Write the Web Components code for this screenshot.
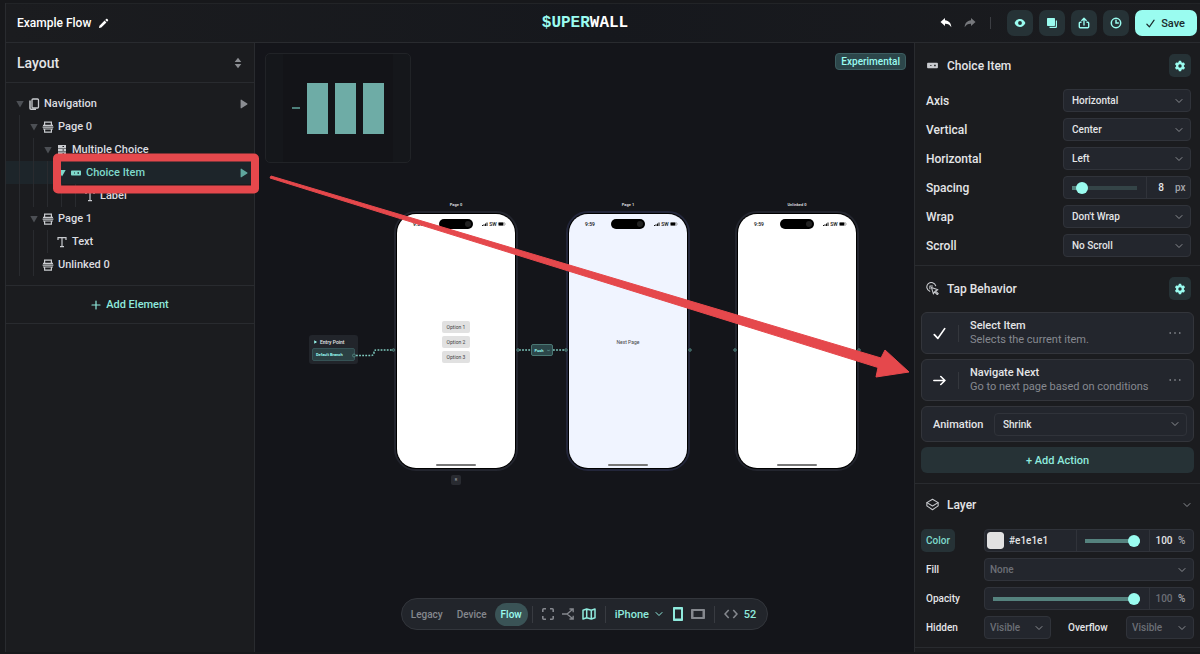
<!DOCTYPE html>
<html lang="en">
<head>
<meta charset="utf-8">
<meta name="viewport" content="width=device-width, initial-scale=1">
<title>Example Flow - Superwall</title>
<style>
    html, body {
        margin: 0;
        height: 100%;
    }
    body {
        --mint: #9afcf0;
        --mint-dim: #7fd9cb;
        --panel: #1b1c1f;
        --canvas: #14151a;
        --field: #23262d;
        --line: #292b2f;
        --text: #e4e5e7;
        --muted: #7b7e85;
        --button: #263236;
        background: #16171a;
        color: var(--text);
        font-family: Roboto, "Liberation Sans", sans-serif;
        font-size: 11px;
        font-weight: 500;
    }
</style>
</head>
<body>
<flow-editor>
    <editor-header slot="header" project="Example Flow"></editor-header>

    <layout-panel slot="left">
        <tree-row depth="0" icon="pages" label="Navigation" open playable></tree-row>
        <tree-row depth="1" icon="page" label="Page 0" open></tree-row>
        <tree-row depth="2" icon="choices" label="Multiple Choice" open></tree-row>
        <tree-row depth="3" icon="item" label="Choice Item" open playable selected></tree-row>
        <tree-row depth="4" icon="text" label="Label"></tree-row>
        <tree-row depth="1" icon="page" label="Page 1" open></tree-row>
        <tree-row depth="2" icon="text" label="Text"></tree-row>
        <tree-row depth="1" icon="page" label="Unlinked 0"></tree-row>
    </layout-panel>

    <flow-canvas slot="canvas"></flow-canvas>

    <inspector-panel slot="right"></inspector-panel>

    <tutorial-arrow slot="overlay"></tutorial-arrow>
</flow-editor>

<script>
// ---------- Icons ----------

const ICONS = {
    pencil: ['0 0 12 12', '<path fill="currentColor" d="M1 11l.6-2.6 5.6-5.6 2 2-5.600 5.600zM7.900 2.100l1-1c.4-.4.9-.4 1.300 0l.7.7c.4.4.4.9 0 1.300l-1 1z"/>'],
    undo: ['0 0 12 12', '<path fill="currentColor" d="M5 1L.5 5 5 9V6.700c2.800-.1 4.800.7 6.300 3.600C11.400 6.500 9 3.500 5 3.200z"/>'],
    redo: ['0 0 12 12', '<path fill="currentColor" d="M7 1l4.500 4L7 9V6.700C4.200 6.600 2.200 7.400.7 10.300.6 6.500 3 3.500 7 3.200z"/>'],
    eye: ['0 0 12 12', '<path fill="currentColor" fill-rule="evenodd" d="M6 2C3.400 2 1.500 3.700.6 6c.9 2.300 2.800 4 5.400 4s4.500-1.700 5.400-4C10.500 3.700 8.600 2 6 2zm0 2.100a1.900 1.900 0 110 3.800 1.900 1.900 0 010-3.800z"/>'],
    copy: ['0 0 12 12', '<path fill="currentColor" d="M1 2c0-.6.4-1 1-1h6c.6 0 1 .4 1 1v6c0 .6-.4 1-1 1H2c-.6 0-1-.4-1-1z"/><path fill="none" stroke="currentColor" stroke-width="1.200" d="M10.400 3.500v6.200c0 .4-.3.700-.7.700H3.500"/>'],
    share: ['0 0 12 12', '<g fill="none" stroke="currentColor" stroke-width="1.400" stroke-linecap="round" stroke-linejoin="round"><path d="M6 8V1.500M3.800 3.500L6 1.300l2.200 2.200M3 5.300H2.200c-.5 0-.9.4-.9.9v3.600c0 .5.4.9.9.9h7.600c.5 0 .9-.4.9-.9V6.200c0-.5-.4-.9-.9-.9H9"/></g>'],
    clock: ['0 0 12 12', '<g fill="none" stroke="currentColor" stroke-width="1.500" stroke-linecap="round"><circle cx="6" cy="6" r="4.700"/><path d="M6 3.300V6h2.300"/></g>'],
    check: ['0 0 12 12', '<path fill="none" stroke="currentColor" stroke-width="1.600" stroke-linecap="round" stroke-linejoin="round" d="M1.200 7l3.300 3.500L10.800 1.500"/>'],
    arrow: ['0 0 12 12', '<path fill="none" stroke="currentColor" stroke-width="1.500" stroke-linecap="round" stroke-linejoin="round" d="M.8 6h10.200M7.200 2.300L11 6 7.200 9.700"/>'],
    sort: ['0 0 8 12', '<path fill="currentColor" d="M4 .8l3.300 4.200H.7zM4 11.200L.7 7h6.600z"/>'],
    down: ['0 0 8 8', '<path fill="currentColor" d="M.3 1h7.400L4 7.500z"/>'],
    play: ['0 0 8 10', '<path fill="currentColor" d="M.6 1.200c0-.5.5-.7.8-.5l5.900 3.900c.3.2.3.6 0 .8l-5.900 3.900c-.3.2-.8 0-.8-.5z"/>'],
    chevron: ['0 0 8 8', '<path fill="none" stroke="currentColor" stroke-width="1" stroke-linecap="round" stroke-linejoin="round" d="M1 2.500l3 3 3-3"/>'],
    pages: ['0 0 12 12', '<g fill="none" stroke="currentColor"><rect x="4" y="1" width="6.500" height="9" rx="1" stroke-width="1.300"/><path d="M2 2.500v7.700c0 .7.300 1 1 1h5" stroke-width="1.500"/></g>'],
    page: ['0 0 12 12', '<g fill="none" stroke="currentColor" stroke-width="1.200"><path d="M2.600 4.500V1.100h6.800v3.400M1 4.400h10M.6 6.200h10.800"/><path d="M2.600 8h6.800v3.200H2.600zM1 8h10"/></g>'],
    choices: ['0 0 12 12', '<path fill="currentColor" fill-rule="evenodd" d="M2 1h8v3H2zM2 4.600h8v3H2zM2 8.200h8v3H2zM6.500 2v.9H8V2zM6.500 5.600v.9H8v-.9zM6.500 9.200v.9H8v-.9z"/>'],
    item: ['0 0 12 12', '<path fill="currentColor" fill-rule="evenodd" d="M1.800 3.500h8.400c.5 0 .8.3.8.8v3.400c0 .5-.3.8-.8.8H1.800c-.5 0-.8-.3-.8-.8V4.300c0-.5.3-.8.8-.8zm2.200 2v1h1v-1zm3.500-.2v1.400H9V5.300z"/>'],
    text: ['0 0 12 12', '<path fill="none" stroke="currentColor" stroke-width="1.200" d="M2 4V1.700h8V4M6 1.700v8.900M4 10.600h4"/>'],
    plus: ['0 0 10 10', '<path fill="none" stroke="currentColor" stroke-width="1.200" stroke-linecap="round" d="M5 1v8M1 5h8"/>'],
    gear: ['0 0 12 12', '<path fill="currentColor" fill-rule="evenodd" d="M4.900.8h2.200l.4 1.500.9.500 1.500-.4 1.100 1.900-1.100 1.100v1.200L11 7.700 9.900 9.600l-1.500-.4-.9.500-.4 1.500H4.900l-.4-1.500-.9-.5-1.500.4L1 7.700l1.100-1.100V5.400L1 4.300l1.100-1.900 1.500.4.900-.5zM6 4.300a1.700 1.700 0 100 3.400 1.700 1.700 0 000-3.400z"/>'],
    tap: ['0 0 12 12', '<g fill="none" stroke="currentColor" stroke-width="1" stroke-linejoin="round" stroke-linecap="round"><path d="M3.500 8.600A4.200 4.200 0 119 3.500M3.600 6.300V3.700H6"/><path d="M5 5l6 2.100-2.400 1.100 2.700 2.500-.9.900-2.600-2.600L6.800 11z"/></g>'],
    layers: ['0 0 12 12', '<g fill="none" stroke="currentColor" stroke-width="1" stroke-linejoin="round" stroke-linecap="round"><path d="M6 1.200l5.200 3.100L6 7.400.8 4.300z"/><path d="M.8 4.500v2.800L6 10.800l5.200-3.500V4.500"/></g>'],
    dots: ['0 0 12 12', '<g fill="currentColor"><circle cx="1.200" cy="6" r=".8"/><circle cx="6" cy="6" r=".8"/><circle cx="10.800" cy="6" r=".8"/></g>'],
    frame: ['0 0 12 12', '<path fill="none" stroke="currentColor" stroke-width="1.600" d="M.8 4V1.800c0-.6.4-1 1-1H4M8 .8h2.200c.6 0 1 .4 1 1V4M11.200 8v2.200c0 .6-.4 1-1 1H8M4 11.200H1.800c-.6 0-1-.4-1-1V8"/>'],
    branch: ['0 0 12 12', '<g fill="none" stroke="currentColor" stroke-width="1.300"><path d="M0 6h5l5.500-4.500M5 6l5.500 4.500M7.500 1h3.700v3.300M7.500 11h3.700V7.700"/></g>'],
    map: ['0 0 14 12', '<path fill="none" stroke="currentColor" stroke-width="1.500" stroke-linejoin="round" d="M1 2.300L4.700 1l4.600 1.300L13 1v8.700L9.300 11 4.700 9.700 1 11zM4.700 1v8.700M9.300 2.300V11"/>'],
    portrait: ['0 0 10 14', '<path fill="currentColor" fill-rule="evenodd" d="M1 0h8c.6 0 1 .4 1 1v12c0 .6-.4 1-1 1H1c-.6 0-1-.4-1-1V1c0-.6.4-1 1-1zm1 2.500v9h6v-9z"/>'],
    landscape: ['0 0 14 10', '<path fill="currentColor" fill-rule="evenodd" d="M1 0h12c.6 0 1 .4 1 1v8c0 .6-.4 1-1 1H1c-.6 0-1-.4-1-1V1c0-.6.4-1 1-1zm1.500 2v6h9V2z"/>'],
    code: ['0 0 14 10', '<path fill="none" stroke="currentColor" stroke-width="1.600" d="M4.700 1L1 5l3.700 4M9.300 1L13 5 9.300 9"/>'],
    signal: ['0 0 6 4', '<g fill="#111"><path d="M0 3h1v1H0zM1.500 2.300h1V4h-1zM3 1.500h1V4H3zM4.500.6h1V4h-1z"/></g>'],
    battery: ['0 0 8 4', '<rect x=".3" y=".3" width="6.400" height="3.400" rx="1" fill="none" stroke="#777" stroke-width=".5"/><rect x=".6" y=".6" width="4.800" height="2.800" rx=".6" fill="#000"/><path d="M7.200 1.500v1" stroke="#777" stroke-width=".6"/>']
};

function icon(name, width = 12, height = width) {
    const [box, body] = ICONS[name];
    return `<svg width="${width}" height="${height}" viewBox="${box}" aria-hidden="true">${body}</svg>`;
}

// Shared by every component that holds form controls
const BASE = `
    * { box-sizing: border-box; }
    svg { display: block; flex: none; }
    button, input, select {
        font: inherit;
        color: inherit;
        margin: 0;
        padding: 0;
        border: 0;
        background: none;
        appearance: none;
        outline: none;
    }
    button { cursor: pointer; }
`;

const SLIDER = `
    input[type="range"] {
        width: 100%;
        min-width: 0;
        height: 12px;
        background: linear-gradient(to right, #55827e var(--fill), #344447 var(--fill)) center / 100% 4px no-repeat;
        border-radius: 2px;
    }
    input[type="range"]::-webkit-slider-thumb {
        appearance: none;
        width: 12px;
        height: 12px;
        border-radius: 50%;
        background: var(--mint);
    }
    .box {
        display: flex;
        height: 23px;
        border: 1px solid #30333a;
        border-radius: 4px;
        background: var(--field);
        font-size: 10px;
    }
    .track {
        flex: 1;
        display: flex;
        align-items: center;
        min-width: 0;
        padding: 0 9px 0 8px;
    }
    .amount {
        display: flex;
        align-items: center;
        width: 44px;
        border-left: 1px solid #30333a;
    }
    .amount input { width: 28px; text-align: center; }
    .unit { color: #a5a7ac; }
`;

// ---------- Page frame ----------

class FlowEditor extends HTMLElement {
    constructor() {
        super();
        this.attachShadow({ mode: 'open' });
    }

    connectedCallback() {
        this.shadowRoot.innerHTML = `
            <style>
                :host {
                    display: grid;
                    grid-template: auto 1fr / auto 1fr auto;
                    position: relative;
                    box-sizing: border-box;
                    min-height: 100%;
                    padding: 3px 0 2px 5px;
                    background: #17181b;
                    overflow: hidden;
                }
                .header { grid-column: 1 / -1; }
                .header, .left { border-left: 1px solid var(--line); }
                .canvas, .left, .right { display: grid; }
            </style>
            <div class="header"><slot name="header"></slot></div>
            <div class="left"><slot name="left"></slot></div>
            <div class="canvas"><slot name="canvas"></slot></div>
            <div class="right"><slot name="right"></slot></div>
            <slot name="overlay"></slot>
        `;
    }
}

customElements.define('flow-editor', FlowEditor);

// ---------- Header ----------

class EditorHeader extends HTMLElement {
    constructor() {
        super();
        this.attachShadow({ mode: 'open' });
    }

    connectedCallback() {
        this.shadowRoot.innerHTML = `
            <style>
                ${BASE}
                :host {
                    display: grid;
                    grid-template-columns: 1fr auto 1fr;
                    align-items: center;
                    box-sizing: border-box;
                    height: 40px;
                    padding: 0 3px 0 11px;
                    border-top: 1px solid #222427;
                    border-bottom: 1px solid var(--line);
                    background: linear-gradient(to right, #1b1c1f, #16181d 50%, #1b1c1f);
                }
                .project, .actions, .save {
                    display: flex;
                    align-items: center;
                }
                .project { gap: 7px; font-size: 12px; color: #fff; }
                .brand {
                    font: bold 16px "Liberation Mono", monospace;
                    color: #fff;
                    padding-right: 44px;
                }
                .brand span { color: var(--mint); }
                .actions { justify-content: flex-end; gap: 6px; }
                .plain { width: 18px; display: grid; place-items: center; color: #fff; }
                .plain:disabled { color: #76787c; }
                .divider { width: 1px; height: 12px; margin: 0 10px 0 5px; background: #3c3e43; }
                .tool {
                    display: grid;
                    place-items: center;
                    width: 26px;
                    height: 26px;
                    border-radius: 7px;
                    background: var(--button);
                    color: var(--mint);
                }
                .save {
                    gap: 6px;
                    height: 26px;
                    padding: 0 12px 0 11px;
                    border-radius: 7px;
                    background: var(--mint);
                    color: #1b2a2c;
                    font-size: 11px;
                }
            </style>
            <div class="project"><span>${this.getAttribute('project')}</span>${icon('pencil', 11)}</div>
            <div class="brand"><span>$UPER</span>WALL</div>
            <div class="actions">
                <button class="plain" aria-label="Undo">${icon('undo')}</button>
                <button class="plain" aria-label="Redo" disabled>${icon('redo')}</button>
                <span class="divider"></span>
                <button class="tool" aria-label="Preview">${icon('eye')}</button>
                <button class="tool" aria-label="Duplicate">${icon('copy')}</button>
                <button class="tool" aria-label="Share">${icon('share')}</button>
                <button class="tool" aria-label="History">${icon('clock')}</button>
                <button class="save">${icon('check', 9)}Save</button>
            </div>
        `;
    }
}

customElements.define('editor-header', EditorHeader);

// ---------- Layout tree ----------

class LayoutPanel extends HTMLElement {
    constructor() {
        super();
        this.attachShadow({ mode: 'open' });
    }

    connectedCallback() {
        this.shadowRoot.innerHTML = `
            <style>
                ${BASE}
                :host {
                    display: block;
                    box-sizing: border-box;
                    width: 249px;
                    background: var(--panel);
                    border-right: 1px solid var(--line);
                }
                header {
                    display: flex;
                    align-items: center;
                    justify-content: space-between;
                    height: 40px;
                    padding: 0 12px 0 11px;
                    border-bottom: 1px solid var(--line);
                    color: #8b8d92;
                }
                h2 { margin: 0; font-size: 14px; font-weight: 500; color: var(--text); }
                .tree { padding: 9px 0; border-bottom: 1px solid var(--line); }
                .add {
                    display: flex;
                    align-items: center;
                    justify-content: center;
                    gap: 5px;
                    width: 100%;
                    height: 38px;
                    border-bottom: 1px solid var(--line);
                    color: #8feadd;
                    font-size: 11px;
                }
            </style>
            <header><h2>Layout</h2>${icon('sort', 8, 12)}</header>
            <div class="tree" role="tree"><slot></slot></div>
            <button class="add">${icon('plus', 10)}Add Element</button>
        `;
    }
}

customElements.define('layout-panel', LayoutPanel);

class TreeRow extends HTMLElement {
    constructor() {
        super();
        this.attachShadow({ mode: 'open' });
    }

    connectedCallback() {
        const depth = Number(this.getAttribute('depth'));
        const open = this.hasAttribute('open');
        // leaves draw a guide where branches draw their triangle
        const guides = '<i class="guide"></i>'.repeat(open ? depth : depth + 1);

        this.setAttribute('role', 'treeitem');
        this.shadowRoot.innerHTML = `
            <style>
                ${BASE}
                :host {
                    display: flex;
                    align-items: center;
                    height: 23px;
                    padding: 0 6px 0 7px;
                    color: #dcdde0;
                    font-size: 11px;
                }
                :host([selected]) { background: #1d252a; color: var(--mint-dim); }
                .guide {
                    align-self: stretch;
                    width: 14px;
                    background: linear-gradient(#292b2f, #292b2f) 6px 0 / 1px 100% no-repeat;
                }
                .toggle, .kind { display: grid; place-items: center; width: 14px; }
                .toggle { color: #4c4f54; }
                :host([selected]) .toggle { color: var(--mint-dim); }
                .kind { color: #c9cbcf; }
                :host([selected]) .kind { color: var(--mint-dim); }
                .label { flex: 1; margin-left: 3px; }
                .run { color: #8b8d92; }
                :host([selected]) .run { color: #5fa69d; }
            </style>
            ${guides}
            ${open ? `<button class="toggle" aria-label="Collapse">${icon('down', 8)}</button>` : ''}
            <span class="kind">${icon(this.getAttribute('icon'), 12)}</span>
            <span class="label">${this.getAttribute('label')}</span>
            ${this.hasAttribute('playable') ? `<button class="run" aria-label="Play">${icon('play', 8, 10)}</button>` : ''}
        `;
    }
}

customElements.define('tree-row', TreeRow);

// ---------- Canvas ----------

class PhonePreview extends HTMLElement {
    constructor() {
        super();
        this.attachShadow({ mode: 'open' });
    }

    connectedCallback() {
        this.shadowRoot.innerHTML = `
            <style>
                ${BASE}
                :host { display: block; width: 124px; text-align: center; }
                .name { height: 14px; font-size: 4px; line-height: 16px; color: #d4d6da; font-weight: 700; }
                .case {
                    height: 260px;
                    padding: 1px;
                    border: 2px solid #23252e;
                    border-radius: 22px;
                    background: #000;
                }
                .screen {
                    display: flex;
                    flex-direction: column;
                    height: 100%;
                    border-radius: 19px;
                    background: #fff;
                    color: #444;
                    font-size: 5px;
                    font-weight: 400;
                }
                :host([tinted]) .case { border-color: #23263a; }
                :host([tinted]) .screen { background: #f0f4ff; }
                .status {
                    display: grid;
                    grid-template-columns: 1fr 34px 1fr;
                    align-items: center;
                    height: 20px;
                    color: #111;
                    font-weight: 500;
                }
                .island {
                    display: flex;
                    justify-content: flex-end;
                    height: 10px;
                    padding: 2px;
                    border-radius: 5px;
                    background: #000;
                }
                .island i { width: 6px; height: 6px; border-radius: 50%; background: #222; }
                .signal { display: flex; align-items: center; justify-content: center; gap: 1px; }
                .body {
                    flex: 1;
                    display: flex;
                    flex-direction: column;
                    align-items: center;
                    justify-content: center;
                    gap: 3px;
                    padding-bottom: 14px;
                }
                .home { width: 40px; height: 2px; margin: 0 auto 2px; border-radius: 1px; background: #777; }
            </style>
            <div class="name">${this.getAttribute('name')}</div>
            <div class="case">
                <div class="screen">
                    <div class="status">
                        <span>9:59</span>
                        <span class="island"><i></i></span>
                        <span class="signal">${icon('signal', 6, 4)}SW${icon('battery', 8, 4)}</span>
                    </div>
                    <div class="body"><slot></slot></div>
                    <div class="home"></div>
                </div>
            </div>
        `;
    }
}

customElements.define('phone-preview', PhonePreview);

class FlowCanvas extends HTMLElement {
    constructor() {
        super();
        this.attachShadow({ mode: 'open' });
    }

    connectedCallback() {
        this.shadowRoot.innerHTML = `
            <style>
                ${BASE}
                :host {
                    display: flex;
                    flex-direction: column;
                    align-items: center;
                    position: relative;
                    box-sizing: border-box;
                    min-width: 0;
                    padding: 10px 8px 22px;
                    background: var(--canvas);
                    overflow: hidden;
                }
                .badge {
                    align-self: flex-end;
                    padding: 0 5px;
                    border: 1px solid #3c5d60;
                    border-radius: 4px;
                    background: #2c464a;
                    color: var(--mint);
                    font-size: 10px;
                    line-height: 15px;
                }
                flow-toolbar { margin-top: auto; }

                /* nodes on the free canvas */
                .node { position: absolute; }
                .minimap {
                    left: 10px;
                    top: 10px;
                    display: flex;
                    align-items: center;
                    justify-content: center;
                    gap: 7px;
                    width: 146px;
                    height: 110px;
                    border: 1px solid #212327;
                    border-radius: 5px;
                    background: linear-gradient(#131418, #131418) center / 110px 100% no-repeat #15171b;
                }
                .minimap i { width: 21px; height: 51px; background: #6eaca6; }
                .minimap i:first-child { width: 8px; height: 2px; background: #4d807b; }
                .edges { left: 0; top: 0; }
                .p0 { left: 139px; top: 154px; }
                .p1 { left: 311px; top: 154px; }
                .p2 { left: 480px; top: 154px; }
                .option {
                    padding: 0 5px;
                    border-radius: 2px;
                    background: #e1e1e1;
                    line-height: 12px;
                }
                .entry {
                    left: 54px;
                    top: 292px;
                    width: 49px;
                    padding: 0 3px 3px;
                    border-radius: 3px;
                    background: #22252b;
                    font-size: 5px;
                }
                .entry div { display: flex; align-items: center; gap: 3px; height: 13px; padding-left: 2px; }
                .entry p {
                    margin: 0;
                    padding-left: 3px;
                    border: 1px solid #365356;
                    border-radius: 2px;
                    background: #2b4043;
                    color: var(--mint);
                    font-size: 4px;
                    font-weight: 700;
                    line-height: 11px;
                }
                .entry svg { color: var(--mint); }
                .push {
                    left: 276px;
                    top: 301px;
                    display: flex;
                    align-items: center;
                    justify-content: center;
                    gap: 3px;
                    width: 22px;
                    height: 12px;
                    border: 1px solid #4a7773;
                    border-radius: 2px;
                    background: #2c474a;
                    color: var(--mint);
                    font-size: 4px;
                    font-weight: 700;
                }
                .key {
                    left: 196px;
                    top: 432px;
                    width: 10px;
                    height: 10px;
                    border-radius: 2px;
                    background: #292b31;
                    color: #9a9ca2;
                    font-size: 4px;
                    line-height: 10px;
                    text-align: center;
                }
            </style>
            <span class="badge">Experimental</span>

            <div class="node minimap"><i></i><i></i><i></i><i></i></div>

            <phone-preview class="node p0" name="Page 0">
                <span class="option">Option 1</span>
                <span class="option">Option 2</span>
                <span class="option">Option 3</span>
            </phone-preview>
            <phone-preview class="node p1" name="Page 1" tinted>Next Page</phone-preview>
            <phone-preview class="node p2" name="Unlinked 0"></phone-preview>

            <div class="node entry">
                <div>${icon('play', 3, 4)}Entry Point</div>
                <p>Default Branch</p>
            </div>

            <svg class="node edges" width="620" height="340" viewBox="0 0 620 340">
                <g fill="none" stroke="#7fcabf" stroke-width="1.500" stroke-dasharray="1.800 1.300">
                    <path d="M101 312.500h15q3 0 3-3t3-2.500h16M264 307h12M298 307h13"/>
                </g>
                <g fill="#2b4043" stroke="#558c86" stroke-width=".8">
                    <circle cx="99" cy="312.500" r="1.500"/>
                    <circle cx="138.500" cy="307" r="1.300"/>
                    <circle cx="263" cy="307" r="1.300"/>
                    <circle cx="311" cy="307" r="1.300"/>
                    <circle cx="435" cy="307" r="1.300"/>
                    <circle cx="480" cy="307" r="1.300"/>
                    <circle cx="604" cy="307" r="1.300"/>
                </g>
            </svg>
            <button class="node push">Push${icon('chevron', 3)}</button>
            <span class="node key">R</span>

            <flow-toolbar></flow-toolbar>
        `;
    }
}

customElements.define('flow-canvas', FlowCanvas);

class FlowToolbar extends HTMLElement {
    constructor() {
        super();
        this.attachShadow({ mode: 'open' });
    }

    connectedCallback() {
        this.shadowRoot.innerHTML = `
            <style>
                ${BASE}
                :host {
                    display: flex;
                    align-items: center;
                    box-sizing: border-box;
                    height: 32px;
                    padding: 0 11px 0 3px;
                    border: 1px solid #33363c;
                    border-radius: 16px;
                    background: #22252b;
                    color: #85888e;
                    font-size: 11px;
                }
                .mode { height: 23px; padding: 0 6px; border-radius: 12px; font-size: 10px; }
                .mode + .mode { margin-left: 2px; }
                .mode.active { background: #3a5356; color: var(--mint); }
                .divider { width: 1px; height: 17px; margin: 0 9px; background: #383b41; }
                .mode + .divider { margin-left: 4px; }
                .group { display: flex; align-items: center; gap: 8px; }
                .on { color: #8feadd; }
                .device { display: flex; align-items: center; gap: 5px; margin-right: 2px; }
                .count { gap: 6px; }
            </style>
            <button class="mode">Legacy</button>
            <button class="mode">Device</button>
            <button class="mode active">Flow</button>
            <span class="divider"></span>
            <div class="group">
                <button aria-label="Fit to screen">${icon('frame')}</button>
                <button aria-label="Auto arrange">${icon('branch')}</button>
                <button class="on" aria-label="Minimap">${icon('map', 14, 12)}</button>
            </div>
            <span class="divider"></span>
            <div class="group">
                <div class="device on">
                    <select aria-label="Device"><option>iPhone</option></select>${icon('chevron', 8)}
                </div>
                <button class="on" aria-label="Portrait">${icon('portrait', 10, 14)}</button>
                <button aria-label="Landscape">${icon('landscape', 14, 10)}</button>
            </div>
            <span class="divider"></span>
            <button class="group count">${icon('code', 14, 10)}<span class="on">52</span></button>
        `;
    }
}

customElements.define('flow-toolbar', FlowToolbar);

// ---------- Inspector ----------

class SelectField extends HTMLElement {
    constructor() {
        super();
        this.attachShadow({ mode: 'open' });
    }

    connectedCallback() {
        this.shadowRoot.innerHTML = `
            <style>
                ${BASE}
                :host {
                    display: grid;
                    grid-template-columns: var(--columns, 1fr 128px);
                    align-items: center;
                    font-size: var(--label-size, 12px);
                }
                .pick {
                    display: grid;
                    align-items: center;
                    color: #8b8d92;
                }
                select {
                    grid-area: 1 / 1;
                    width: 100%;
                    height: 23px;
                    padding: 0 20px 0 var(--inset, 8px);
                    border: 1px solid #30333a;
                    border-radius: 4px;
                    background: var(--field);
                    color: var(--text);
                    font-size: 10px;
                }
                :host([empty]) select { color: #6c6f76; }
                svg { grid-area: 1 / 1; justify-self: end; margin-right: 8px; pointer-events: none; }
            </style>
            <label for="control">${this.getAttribute('label')}</label>
            <span class="pick">
                <select id="control"><option>${this.getAttribute('value')}</option></select>
                ${icon('chevron', 8)}
            </span>
        `;
    }
}

customElements.define('select-field', SelectField);

class SliderField extends HTMLElement {
    constructor() {
        super();
        this.attachShadow({ mode: 'open' });
    }

    connectedCallback() {
        const value = this.getAttribute('value');
        const label = this.getAttribute('label');

        this.shadowRoot.innerHTML = `
            <style>
                ${BASE}
                ${SLIDER}
                :host {
                    display: grid;
                    grid-template-columns: var(--columns, 1fr 128px);
                    align-items: center;
                    font-size: var(--label-size, 12px);
                }
                :host([empty]) .amount input { color: #6c6f76; }
            </style>
            <label for="range">${label}</label>
            <div class="box">
                <div class="track"><input type="range" id="range" min="0" max="100" value="${value}"></div>
                <div class="amount">
                    <input type="text" id="number" aria-label="${label} value" value="${value}">
                    <span class="unit">${this.getAttribute('unit')}</span>
                </div>
            </div>
        `;

        this.defineListeners();
    }

    defineListeners() {
        const range = this.shadowRoot.querySelector('#range');
        const number = this.shadowRoot.querySelector('#number');
        const paint = () => range.style.setProperty('--fill', `${range.value}%`);

        range.addEventListener('input', () => {
            number.value = range.value;
            paint();
        });
        number.addEventListener('change', () => {
            range.value = number.value;
            paint();
        });
        paint();
    }
}

customElements.define('slider-field', SliderField);

class ColorField extends HTMLElement {
    constructor() {
        super();
        this.attachShadow({ mode: 'open' });
    }

    connectedCallback() {
        const value = this.getAttribute('value');

        this.shadowRoot.innerHTML = `
            <style>
                ${BASE}
                ${SLIDER}
                :host {
                    display: grid;
                    grid-template-columns: 63px 1fr;
                    align-items: center;
                    font-size: 10px;
                }
                label {
                    justify-self: start;
                    height: 23px;
                    padding: 0 5px;
                    border-radius: 5px;
                    background: var(--button);
                    color: var(--mint-dim);
                    line-height: 23px;
                }
                .hex {
                    display: flex;
                    align-items: center;
                    gap: 5px;
                    width: 92px;
                    padding-left: 2px;
                    border-right: 1px solid #30333a;
                }
                .hex input[type="text"] { width: 60px; }
                input[type="color"] { width: 17px; height: 17px; border-radius: 3px; overflow: hidden; }
                input[type="color"]::-webkit-color-swatch-wrapper { padding: 0; }
                input[type="color"]::-webkit-color-swatch { border: 0; border-radius: 3px; }
                input[type="range"] { --fill: 100%; }
            </style>
            <label for="hex">Color</label>
            <div class="box">
                <div class="hex">
                    <input type="color" aria-label="Swatch" value="${value}">
                    <input type="text" id="hex" value="${value}">
                </div>
                <div class="track"><input type="range" aria-label="Alpha" min="0" max="100" value="100"></div>
                <div class="amount">
                    <input type="text" aria-label="Alpha value" value="100">
                    <span class="unit">%</span>
                </div>
            </div>
        `;
    }
}

customElements.define('color-field', ColorField);

class ActionCard extends HTMLElement {
    constructor() {
        super();
        this.attachShadow({ mode: 'open' });
    }

    connectedCallback() {
        this.shadowRoot.innerHTML = `
            <style>
                ${BASE}
                :host {
                    display: flex;
                    align-items: center;
                    box-sizing: border-box;
                    height: 42px;
                    padding: 0 12px 0 11px;
                    border: 1px solid #33353b;
                    border-radius: 6px;
                    background: var(--field);
                    color: #fff;
                }
                .text {
                    flex: 1;
                    margin-left: 11px;
                    color: var(--text);
                    font-size: 11px;
                    line-height: 14px;
                }
                .divider { width: 1px; height: 17px; margin-left: 12px; background: #34373d; }
                .text span { display: block; color: #868990; font-weight: 400; }
                button { color: #a5a7ac; }
            </style>
            ${icon(this.getAttribute('icon'), 13)}
            <i class="divider"></i>
            <div class="text">${this.getAttribute('label')}<span><slot></slot></span></div>
            <button aria-label="More">${icon('dots', 12)}</button>
        `;
    }
}

customElements.define('action-card', ActionCard);

class InspectorSection extends HTMLElement {
    constructor() {
        super();
        this.attachShadow({ mode: 'open' });
    }

    connectedCallback() {
        const folds = this.hasAttribute('folds');

        this.shadowRoot.innerHTML = `
            <style>
                ${BASE}
                :host {
                    display: block;
                    padding: 11px 6px 8px;
                    border-bottom: 1px solid var(--line);
                }
                header {
                    display: flex;
                    align-items: center;
                    gap: 8px;
                    height: 23px;
                    margin-bottom: 12px;
                    padding: 0 3px 0 5px;
                    color: #c9cbcf;
                }
                :host([folds]) header { height: 19px; margin-bottom: 15px; }
                h3 { flex: 1; margin: 0; font-size: 12px; font-weight: 500; color: var(--text); }
                .gear {
                    display: grid;
                    place-items: center;
                    width: 22px;
                    height: 23px;
                    border-radius: 5px;
                    background: var(--button);
                    color: var(--mint);
                }
                .fold { color: #8b8d92; }
            </style>
            <header>
                ${icon(this.getAttribute('icon'), 13)}
                <h3>${this.getAttribute('heading')}</h3>
                ${folds
                    ? `<button class="fold" aria-label="Collapse">${icon('chevron', 8)}</button>`
                    : `<button class="gear" aria-label="Settings">${icon('gear', 12)}</button>`}
            </header>
            <slot></slot>
        `;
    }
}

customElements.define('inspector-section', InspectorSection);

class InspectorPanel extends HTMLElement {
    constructor() {
        super();
        this.attachShadow({ mode: 'open' });
    }

    connectedCallback() {
        this.shadowRoot.innerHTML = `
            <style>
                ${BASE}
                :host {
                    display: block;
                    box-sizing: border-box;
                    width: 286px;
                    background: var(--panel);
                    border-left: 1px solid var(--line);
                }
                .fields, .layer { display: grid; gap: 6px; }
                .fields { padding: 0 3px 0 5px; }
                .actions { display: grid; gap: 5px; padding-bottom: 2px; }
                .layer {
                    --columns: 58px 1fr;
                    --label-size: 10px;
                    --inset: 5px;
                }
                .layer > :not(color-field) { padding-left: 5px; }
                .pair { display: grid; grid-template-columns: 125px 1fr; gap: 17px; }
                .animation {
                    height: 36px;
                    padding: 0 6px 0 11px;
                    border: 1px solid #33353b;
                    border-radius: 6px;
                    background: var(--field);
                    --columns: 61px 1fr;
                    --label-size: 11px;
                }
                .add {
                    height: 26px;
                    border-radius: 6px;
                    background: var(--button);
                    color: #8feadd;
                    font-size: 11px;
                }
            </style>
            <inspector-section icon="item" heading="Choice Item">
                <div class="fields">
                    <select-field label="Axis" value="Horizontal"></select-field>
                    <select-field label="Vertical" value="Center"></select-field>
                    <select-field label="Horizontal" value="Left"></select-field>
                    <slider-field label="Spacing" value="8" unit="px"></slider-field>
                    <select-field label="Wrap" value="Don't Wrap"></select-field>
                    <select-field label="Scroll" value="No Scroll"></select-field>
                </div>
            </inspector-section>

            <inspector-section icon="tap" heading="Tap Behavior">
                <div class="actions">
                    <action-card icon="check" label="Select Item">Selects the current item.</action-card>
                    <action-card icon="arrow" label="Navigate Next">Go to next page based on conditions</action-card>
                    <select-field class="animation" label="Animation" value="Shrink"></select-field>
                    <button class="add">+ Add Action</button>
                </div>
            </inspector-section>

            <inspector-section icon="layers" heading="Layer" folds>
                <div class="layer">
                    <color-field value="#e1e1e1"></color-field>
                    <select-field label="Fill" value="None" empty></select-field>
                    <slider-field label="Opacity" value="100" unit="%" empty></slider-field>
                    <div class="pair">
                        <select-field label="Hidden" value="Visible" empty></select-field>
                        <select-field label="Overflow" value="Visible" empty></select-field>
                    </div>
                </div>
            </inspector-section>
        `;
    }
}

customElements.define('inspector-panel', InspectorPanel);

// ---------- Tutorial overlay ----------

// Outlines the selected tree row and points at the action it triggers
class TutorialArrow extends HTMLElement {
    constructor() {
        super();
        this.attachShadow({ mode: 'open' });
    }

    connectedCallback() {
        this.shadowRoot.innerHTML = `
            <style>
                :host {
                    position: absolute;
                    left: 0;
                    top: 0;
                    pointer-events: none;
                }
                svg { display: block; }
            </style>
            <svg width="920" height="390" viewBox="0 0 920 390" aria-hidden="true">
                <rect x="57" y="157.500" width="198" height="32" rx="1" fill="none" stroke="#e5484c" stroke-width="8"/>
                <path fill="#e5484c" stroke="#e5484c" stroke-linejoin="round" d="M271 176l610 182 4-8 24 22-33 5 2-9.500L270 178z"/>
            </svg>
        `;
    }
}

customElements.define('tutorial-arrow', TutorialArrow);
</script>
</body>
</html>
